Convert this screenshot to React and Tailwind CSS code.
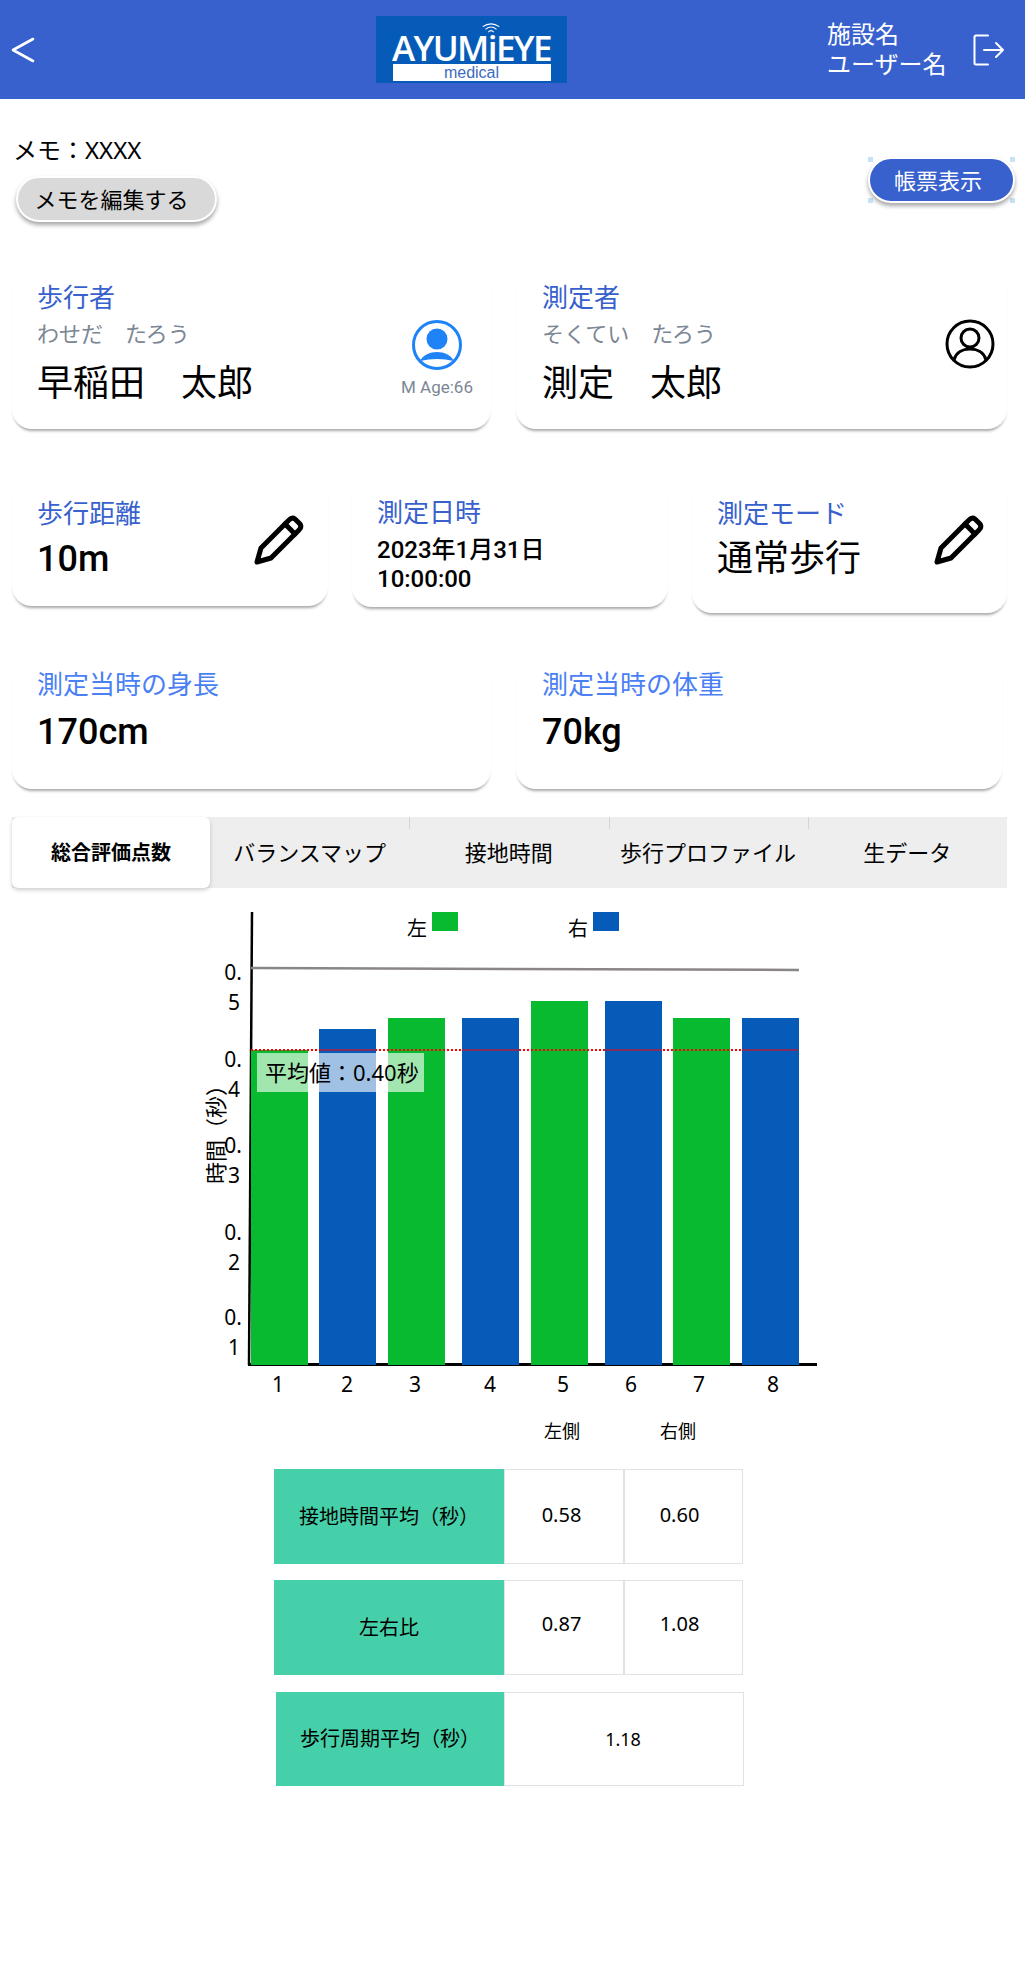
const bars = [
    { x: 251, w: 57, top: 1050, color: '#08BA2F', label: 1, cx: 278 },
    { x: 319, w: 57, top: 1029, color: '#075BB8', label: 2, cx: 347 },
    { x: 388, w: 57, top: 1018, color: '#08BA2F', label: 3, cx: 415 },
    { x: 462, w: 57, top: 1018, color: '#075BB8', label: 4, cx: 490 },
    { x: 531, w: 57, top: 1001, color: '#08BA2F', label: 5, cx: 563 },
    { x: 605, w: 57, top: 1001, color: '#075BB8', label: 6, cx: 631 },
    { x: 673, w: 57, top: 1018, color: '#08BA2F', label: 7, cx: 699 },
    { x: 742, w: 57, top: 1018, color: '#075BB8', label: 8, cx: 773 },
];

const ticks = [
    { digit: '5', y: 972 },
    { digit: '4', y: 1059 },
    { digit: '3', y: 1145 },
    { digit: '2', y: 1232 },
    { digit: '1', y: 1317 },
];

const tabs = ['総合評価点数', 'バランスマップ', '接地時間', '歩行プロファイル', '生データ'];

// 鉛筆アイコン
const PencilIcon = ({ className }) => (
    <svg viewBox="0 0 50 50" className={className} fill="none" stroke="#000" strokeWidth="5" strokeLinejoin="round" strokeLinecap="round">
        <path d="M3 47 L7 33 L35 5 Q38 2 41 4 L46 9 Q48 12 45 15 L17 43 Z" />
        <path d="M31 9 L41 19" />
    </svg>
);

const Card = ({ className, children }) => (
    <div className={`bg-white rounded-[20px] shadow-[0_4px_3px_-2px_rgba(0,0,0,0.35)] ${className}`}>
        {children}
    </div>
);

const Chart = () => (
    <svg viewBox="0 905 1025 510" className="block w-[1025px] h-[510px] mt-[17px]">
        <line x1="252" y1="912" x2="249" y2="1365" stroke="#000" strokeWidth="2.5" />
        <line x1="248" y1="1364.5" x2="817" y2="1364.5" stroke="#000" strokeWidth="3" />
        <line x1="251" y1="968" x2="799" y2="970" stroke="#8a8588" strokeWidth="2.5" />

        {bars.map((b) => (
            <rect key={b.label} x={b.x} y={b.top} width={b.w} height={1365 - b.top} fill={b.color} />
        ))}

        <line x1="251" y1="1050" x2="799" y2="1050" stroke="#FF0000" strokeWidth="2" strokeDasharray="2 2" />
        <rect x="257" y="1053" width="167" height="39" fill="#fff" fillOpacity="0.62" />
        <text x="265" y="1081" fontSize="22" fill="#000">平均値：0.40秒</text>

        <text x="407" y="936" fontSize="20" fill="#000">左</text>
        <rect x="432" y="912" width="26" height="19" fill="#08BA2F" />
        <text x="568" y="936" fontSize="20" fill="#000">右</text>
        <rect x="593" y="912" width="26" height="19" fill="#075BB8" />

        {ticks.map((t) => (
            <g key={t.digit} fontSize="21" fill="#000" textAnchor="middle">
                <text x="233" y={t.y + 8}>0.</text>
                <text x="234" y={t.y + 38}>{t.digit}</text>
            </g>
        ))}
        <text x="218" y="1129" fontSize="22" fill="#000" textAnchor="middle" dominantBaseline="middle" transform="rotate(-90 218 1129)">時間（秒）</text>

        {bars.map((b) => (
            <text key={b.label} x={b.cx} y="1392" fontSize="21" fill="#000" textAnchor="middle">{b.label}</text>
        ))}
    </svg>
);

const App = () => {
    return (
        <div className="w-[1025px] h-[1983px] bg-white text-black overflow-hidden font-['Noto_Sans','Noto_Sans_CJK_JP',sans-serif]">
            {/* ヘッダー */}
            <header className="h-[99px] bg-[#3861CE] flex items-center text-white relative">
                <svg viewBox="0 0 26 26" className="ml-[10px] w-[26px] h-[26px]" fill="none" stroke="#fff" strokeWidth="2.6" strokeLinecap="round" strokeLinejoin="round">
                    <path d="M23 2 L3 13 L23 24" />
                </svg>
                <div className="ml-[340px] w-[191px] h-[67px] bg-[#075BB8] flex flex-col items-center relative">
                    <svg viewBox="0 0 20 12" className="absolute top-[6px] left-[105px] w-[20px] h-[11px]" fill="none" stroke="#fff" strokeWidth="1.2">
                        <path d="M1 5 Q10 -1 19 5" />
                        <path d="M4 8 Q10 3 16 8" />
                        <path d="M7 11 Q10 8 13 11" />
                    </svg>
                    <div className="mt-[12px] h-[35px] leading-[40px] text-[35px] font-semibold font-['Open_Sans',sans-serif] tracking-[-1.6px] whitespace-nowrap">AYUMiEYE</div>
                    <div className="mt-[1px] w-[158px] h-[17px] bg-white text-[#3D6BC0] text-[16px] leading-[17px] text-center font-['Liberation_Sans',sans-serif]">medical</div>
                </div>
                <div className="ml-[260px] text-[24px] leading-[30px] pb-[2px]">
                    <div>施設名</div>
                    <div>ユーザー名</div>
                </div>
                <svg viewBox="0 0 32 32" className="ml-[26px] w-[32px] h-[32px]" fill="none" stroke="#fff" strokeWidth="2" strokeLinecap="round" strokeLinejoin="round">
                    <path d="M15 1.5 H3 Q1.5 1.5 1.5 3 V29 Q1.5 30.5 3 30.5 H15" />
                    <path d="M11 16 H30 M23 9 L30 16 L23 23" />
                </svg>
            </header>

            {/* メモ */}
            <section className="h-[169px] flex justify-between items-start pl-[13px] pr-[10px] pt-[36px]">
                <div>
                    <div className="text-[24px] leading-[30px]">メモ：XXXX</div>
                    <button className="mt-[11px] ml-[3px] w-[201px] h-[46px] rounded-full bg-[#D9D9D9] text-[22px] pr-[10px] border-2 border-white shadow-[0_3px_4px_rgba(0,0,0,0.35)]">メモを編集する</button>
                </div>
                <div className="mt-[22px] w-[147px] h-[46px] relative">
                    {/* 角の選択ハンドル跡 */}
                    <span className="absolute left-0 top-0 w-[5px] h-[5px] bg-[#C5E2F6]"></span>
                    <span className="absolute right-0 top-0 w-[5px] h-[5px] bg-[#C5E2F6]"></span>
                    <span className="absolute left-0 bottom-0 w-[5px] h-[5px] bg-[#C5E2F6]"></span>
                    <span className="absolute right-0 bottom-0 w-[5px] h-[5px] bg-[#C5E2F6]"></span>
                    <button className="relative w-full h-full rounded-full bg-[#3861CE] text-white text-[22px] pr-[7px] border-2 border-white shadow-[0_3px_4px_rgba(0,0,0,0.35)]">帳票表示</button>
                </div>
            </section>

            {/* 歩行者・測定者 */}
            <div className="flex gap-[25px] pl-[12px] pr-[18px]">
                <Card className="w-[479px] h-[161px] pl-[25px] pt-[12px] flex justify-between">
                    <div>
                        <div className="text-[26px] leading-[34px] text-[#3861CE]">歩行者</div>
                        <div className="mt-[5px] text-[22px] leading-[28px] text-[#7B8794]">わせだ　たろう</div>
                        <div className="mt-[13px] text-[36px] leading-[48px] font-['Roboto','Noto_Sans_CJK_JP',sans-serif]">早稲田　太郎</div>
                    </div>
                    <div className="w-[90px] mr-[9px] mt-[40px] flex flex-col items-center">
                        <svg viewBox="0 0 50 50" className="w-[50px] h-[50px]">
                            <circle cx="25" cy="25" r="23.5" fill="none" stroke="#1E83F7" strokeWidth="3" />
                            <circle cx="25" cy="19" r="10.5" fill="#1E83F7" />
                            <path d="M8 41 C11 35 18 32 25 32 C32 32 39 35 42 41 Q25 37 8 41 Z" fill="#1E83F7" />
                        </svg>
                        <div className="mt-[7px] text-[17px] leading-[20px] text-[#7B8794] font-['Roboto',sans-serif] whitespace-nowrap">M Age:66</div>
                    </div>
                </Card>
                <Card className="w-[491px] h-[161px] pl-[26px] pt-[12px] flex justify-between">
                    <div>
                        <div className="text-[26px] leading-[34px] text-[#3861CE]">測定者</div>
                        <div className="mt-[5px] text-[22px] leading-[28px] text-[#7B8794]">そくてい　たろう</div>
                        <div className="mt-[13px] text-[36px] leading-[48px] font-['Roboto','Noto_Sans_CJK_JP',sans-serif]">測定　太郎</div>
                    </div>
                    <svg viewBox="0 0 50 50" className="w-[50px] h-[52px] mr-[12px] mt-[38px]" fill="none" stroke="#000" strokeWidth="3">
                        <circle cx="25" cy="25" r="23" />
                        <circle cx="25" cy="19" r="9" />
                        <path d="M9 41 C11 33 18 30 25 30 C32 30 39 33 41 41" />
                    </svg>
                </Card>
            </div>

            {/* 距離・日時・モード */}
            <div className="mt-[45px] flex items-start gap-[24px] pl-[12px]">
                <Card className="w-[316px] h-[132px] pl-[25px] pr-[24px] pt-[22px] flex justify-between">
                    <div>
                        <div className="text-[26px] leading-[34px] text-[#3861CE]">歩行距離</div>
                        <div className="mt-[5px] text-[36px] leading-[48px] font-medium font-['Roboto',sans-serif]">10m</div>
                    </div>
                    <PencilIcon className="w-[50px] h-[50px] mt-[19px]" />
                </Card>
                <Card className="w-[316px] h-[133px] pl-[25px] pt-[21px]">
                    <div className="text-[26px] leading-[34px] text-[#3861CE]">測定日時</div>
                    <div className="mt-[7px] text-[24px] leading-[29px] font-medium font-['Roboto','Noto_Sans_CJK_JP',sans-serif]">2023年1月31日</div>
                    <div className="text-[24px] leading-[29px] font-medium font-['Roboto',sans-serif]">10:00:00</div>
                </Card>
                <Card className="w-[315px] h-[139px] pl-[25px] pr-[23px] pt-[22px] flex justify-between">
                    <div>
                        <div className="text-[26px] leading-[34px] text-[#3861CE]">測定モード</div>
                        <div className="mt-[5px] text-[36px] leading-[48px] font-['Roboto','Noto_Sans_CJK_JP',sans-serif]">通常歩行</div>
                    </div>
                    <PencilIcon className="w-[50px] h-[50px] mt-[19px]" />
                </Card>
            </div>

            {/* 身長・体重 */}
            <div className="mt-[45px] flex gap-[25px] pl-[12px]">
                <Card className="w-[479px] h-[131px] pl-[25px] pt-[9px]">
                    <div className="text-[26px] leading-[34px] text-[#4A7FF5]">測定当時の身長</div>
                    <div className="mt-[7px] text-[36px] leading-[48px] font-medium font-['Roboto',sans-serif]">170cm</div>
                </Card>
                <Card className="w-[486px] h-[131px] pl-[26px] pt-[9px]">
                    <div className="text-[26px] leading-[34px] text-[#4A7FF5]">測定当時の体重</div>
                    <div className="mt-[7px] text-[36px] leading-[48px] font-medium font-['Roboto',sans-serif]">70kg</div>
                </Card>
            </div>

            {/* タブ */}
            <div className="mt-[28px] ml-[12px] w-[995px] h-[71px] bg-[#EEEEEE] flex">
                {tabs.map((tab, i) => (
                    i === 0 ? (
                        <div key={tab} className="w-[198px] h-[71px] shrink-0 bg-white rounded-[6px] shadow-[0_2px_4px_rgba(0,0,0,0.2)] flex items-center justify-center text-[20px] font-bold">
                            {tab}
                        </div>
                    ) : (
                        <div key={tab} className="flex-1 flex items-center justify-center text-[22px] whitespace-nowrap relative">
                            {i > 1 && <span className="absolute left-0 top-0 w-px h-[12px] bg-[#D5D5D5]"></span>}
                            {tab}
                        </div>
                    )
                ))}
            </div>

            <Chart />

            {/* 集計テーブル */}
            <div className="mt-[4px] flex pl-[504px] h-[24px] text-[18px] leading-[24px]">
                <div className="w-[120px] text-center pr-[4px]">左側</div>
                <div className="w-[120px] text-center pr-[12px]">右側</div>
            </div>
            <div className="mt-[26px] flex ml-[274px] h-[95px] text-[20px]">
                <div className="w-[230px] bg-[#46D0AA] flex items-center justify-center">接地時間平均（秒）</div>
                <div className="w-[120px] border border-[#E2E2E2] flex items-center justify-center pb-[4px] pr-[5px]">0.58</div>
                <div className="w-[119px] border border-[#E2E2E2] flex items-center justify-center pb-[4px] pr-[8px]">0.60</div>
            </div>
            <div className="mt-[16px] flex ml-[274px] h-[95px] text-[20px]">
                <div className="w-[230px] bg-[#46D0AA] flex items-center justify-center">左右比</div>
                <div className="w-[120px] border border-[#E2E2E2] flex items-center justify-center pb-[8px] pr-[5px]">0.87</div>
                <div className="w-[119px] border border-[#E2E2E2] flex items-center justify-center pb-[8px] pr-[8px]">1.08</div>
            </div>
            <div className="mt-[17px] flex ml-[276px] h-[94px]">
                <div className="w-[228px] bg-[#46D0AA] flex items-center justify-center text-[20px]">歩行周期平均（秒）</div>
                <div className="w-[240px] border border-[#E2E2E2] flex items-center justify-center text-[18px] pr-[2px]">1.18</div>
            </div>
        </div>
    );
};

export default App;
